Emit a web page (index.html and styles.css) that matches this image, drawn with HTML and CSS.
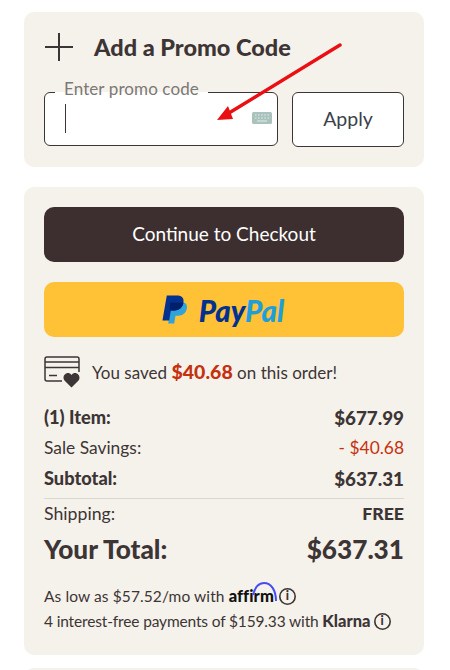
FILE: index.html
```html
<!DOCTYPE html>
<html lang="en">
<head>
<meta charset="utf-8">
<title>Order summary</title>
<link rel="stylesheet" href="styles.css">
</head>
<body>
<main class="page">
  <section class="card promo">
    <h2 class="promo-head">
      <svg class="plus" viewBox="0 0 28 28" aria-hidden="true"><path d="M14 0v28M0 14h28"/></svg>
      <span>Add a Promo Code</span>
    </h2>
    <div class="promo-row">
      <div class="field">
        <span class="field-label">Enter promo code</span>
        <span class="caret"></span>
        <svg class="kbd" viewBox="0 0 20 12" aria-hidden="true"><rect width="20" height="12" rx="1.5" fill="#a9c2bc"/><path d="M3 3h1.500M6 3h1.500M9.200 3h1.500M12.300 3h1.500M15.500 3h1.500M3 6h1.500M6 6h1.500M9.200 6h1.500M12.300 6h1.500M15.500 6h1.500M5 9h10" stroke="#e4edea" stroke-width="1.200"/></svg>
      </div>
      <button class="apply">Apply</button>
    </div>
    <svg class="arrow" viewBox="0 0 140 90" aria-hidden="true"><path d="M124 5 13 73" stroke="#ea0f13" stroke-width="3.400" stroke-linecap="round"/><path d="M1 80 12 66 17 79Z" fill="#ea0f13"/></svg>
  </section>

  <section class="card summary">
    <button class="checkout">Continue to Checkout</button>
    <button class="paypal">
      <svg class="pp" viewBox="0 0 28 32" aria-hidden="true">
        <path d="M11 8h10c5 0 6.500 3 5.800 6.500C26 19 22.500 22 18 22h-3l-1.300 8H7.500Z" fill="#2ea3dc"/>
        <path d="M6 1h10.500c5 0 7.500 2.500 6.800 7C22.500 13 19 16.500 14 16.500h-3.800L8.500 27H1.500Z" fill="#03318f"/>
        <path d="M9.500 8.500h13.800C22.500 13 19 16.500 14 16.500h-3.800l-1 0Z" fill="#011f6b"/>
      </svg>
      <span class="pp-text"><span class="pp-pay">Pay</span><span class="pp-pal">Pal</span></span>
    </button>
    <div class="saved">
      <svg class="saved-icon" viewBox="0 0 36 32" aria-hidden="true">
        <path d="M18 25H3a2 2 0 0 1-2-2V3a2 2 0 0 1 2-2h30a2 2 0 0 1 2 2v13" fill="none" stroke="#3d3535" stroke-width="1.500"/>
        <path d="M1 6h34M1 11.500h34M5 19.500h8" fill="none" stroke="#3d3535" stroke-width="1.500"/>
        <path d="M27.500 31.500 20.500 24.500c-3.500-4.500 3-10.500 7-5.500 4-5 10.500 1 7 5.500Z" fill="#3d3535"/>
      </svg>
      <p>You saved <strong>$40.68</strong> on this order!</p>
    </div>
    <div class="lines">
      <div class="line line-item"><span>(1) Item:</span><span class="amt">$677.99</span></div>
      <div class="line line-sale"><span>Sale Savings:</span><span class="red">- $40.68</span></div>
      <div class="line line-item"><span>Subtotal:</span><span class="amt">$637.31</span></div>
      <div class="line line-ship"><span>Shipping:</span><b>FREE</b></div>
      <div class="line line-total"><span>Your Total:</span><span>$637.31</span></div>
    </div>
    <div class="finance">
      <p>As low as $57.52/mo with <span class="affirm">affirm<svg class="affirm-arc" viewBox="0 0 26 20" aria-hidden="true"><path d="M1 13C3 5 7 1 12 1c7 0 12 7 12 18" fill="none" stroke="#4a4af4" stroke-width="2"/></svg></span><span class="info info-a">i</span></p>
      <p class="tight">4 interest-free payments of $159.33 with <b>Klarna</b><span class="info">i</span></p>
    </div>
  </section>
  <div class="card next"></div>
</main>
</body>
</html>
```
FILE: styles.css
```css
* { box-sizing: border-box; }
html, body { margin: 0; height: 670px; overflow: hidden; background: #fff; }
body { font-family: "Lato", "Liberation Sans", sans-serif; color: #3d3535; }
.page { width: 400px; margin-left: 24px; padding-top: 12px; display: flex; flex-direction: column; gap: 20px; }
.card { background: #f5f2eb; border-radius: 10px; padding: 20px; position: relative; }
.promo { height: 155px; }
.promo-head { margin: 0; display: flex; align-items: center; gap: 21px; height: 30px; font-size: 23.500px; line-height: 28px; font-weight: 900; letter-spacing: 0; }
.plus { width: 28px; height: 28px; margin-left: 1px; flex: none; stroke: #3d3535; stroke-width: 2; fill: none; }
.promo-row { display: flex; gap: 14px; margin-top: 30px; }
.field { position: relative; width: 234px; height: 54px; background: #fff; border: 1px solid #3d3535; border-radius: 6px; }
.field-label { position: absolute; left: 10px; top: -14px; padding: 0 9px; height: 22px; background: linear-gradient(#f5f2eb 0 13px, #fff 13px); font-size: 17px; line-height: 20px; color: #7b7876; letter-spacing: 0.1px; }
.caret { position: absolute; left: 20px; top: 11px; width: 1px; height: 29px; background: #3d3535; }
.kbd { position: absolute; right: 5px; top: 19px; width: 20px; height: 12px; }
.apply { width: 112px; height: 55px; background: #fff; border: 1px solid #3d3535; border-radius: 6px; font: 400 19.500px "Lato", sans-serif; color: #3b3f4a; padding: 0 0 3px; }
.arrow { position: absolute; left: 192px; top: 28px; width: 140px; height: 90px; }
.summary { height: 468px; }
.checkout { display: block; width: 360px; height: 55px; background: #3d2f2f; color: #fff; border: 0; border-radius: 10px; font: 400 19px "Lato", sans-serif; padding: 0 0 3px; }
.paypal { width: 360px; height: 55px; margin-top: 20px; background: #ffc136; border: 0; border-radius: 10px; display: flex; align-items: center; justify-content: center; gap: 11px; padding: 0 3px 0 0; }
.pp { width: 27px; height: 32px; flex: none; }
.pp-text { font: italic 900 29.500px/32px "Lato", "Liberation Sans", sans-serif; padding-top: 3px; }
.pp-pay { color: #03318f; }
.pp-pal { color: #1e9fdc; }
.saved { display: flex; align-items: center; gap: 12px; margin-top: 20px; height: 30px; }
.saved-icon { width: 36px; height: 32px; flex: none; }
.saved p { margin: 0 0 2px; font-size: 17px; letter-spacing: 0.02px; }
.saved strong { color: #c5310f; font-size: 19.500px; font-weight: 900; }
.lines { margin-top: 15px; }
.line { display: flex; justify-content: space-between; align-items: center; }
.line-item { height: 30px; font-size: 18.200px; font-weight: 900; }
.line-item .amt { font-size: 18.800px; }
.line-sale { height: 31px; font-size: 17.400px; }
.red { color: #c5310f; }
.line-ship { height: 32px; margin-top: 5px; padding-bottom: 3px; border-top: 1px solid #d9d7d2; font-size: 17.700px; }
.line-ship b { font-weight: 900; }
.line-total { height: 38px; font-size: 26.200px; font-weight: 900; }
.finance { margin-top: 16px; font-size: 15.500px; line-height: 25px; }
.finance p { display: flex; align-items: center; margin: 0; white-space: pre; letter-spacing: 0.1px; }
.finance .tight { letter-spacing: -0.15px; }
.finance b { font-size: 16.500px; font-weight: 900; letter-spacing: 0; }
.affirm { position: relative; font-weight: 900; color: #111; font-size: 16.500px; }
.affirm-arc { position: absolute; left: 23px; top: -2px; width: 26px; height: 20px; }
.info { display: flex; align-items: center; justify-content: center; width: 17px; height: 17px; margin-left: 3px; box-shadow: inset 0 0 0 1.600px #3d3535; border-radius: 50%; font-size: 12.500px; line-height: 1; font-weight: 900; }
.info-a { margin-left: 5px; }
.next { height: 30px; padding: 0; margin-top: -7px; }
```
